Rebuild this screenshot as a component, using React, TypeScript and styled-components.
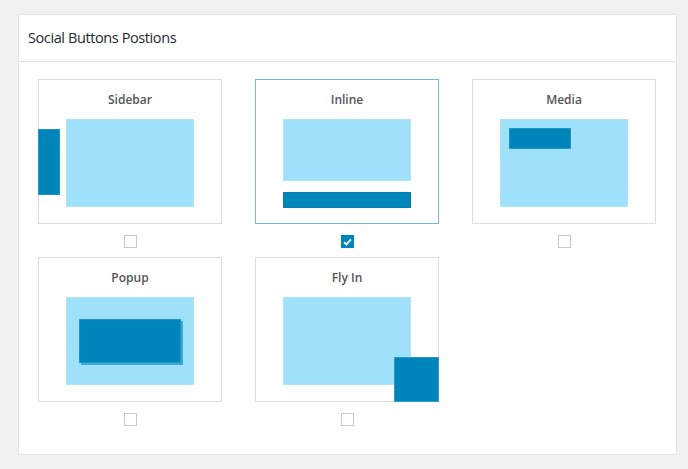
import styled, { createGlobalStyle } from 'styled-components';

const GlobalStyle = createGlobalStyle`
    body {
        margin: 0;
        background: #f1f1f1;
        font-family: "Open Sans", "Liberation Sans", sans-serif;
        color: #23282d;
    }
`;

const Page = styled.div`
    padding: 14px 11px 14px 18px;
`;

const Panel = styled.div`
    width: 659px;
    height: 441px;
    box-sizing: border-box;
    background: #fff;
    border: 1px solid #e2e4e7;
`;

const PanelHeader = styled.div`
    height: 47px;
    box-sizing: border-box;
    padding: 0 9px 1px;
    display: flex;
    align-items: center;
    border-bottom: 1px solid #e5e5e5;
    font-size: 14.5px;
    letter-spacing: -0.4px;
    font-weight: 400;
    color: #23282d;
`;

const Grid = styled.div`
    display: grid;
    grid-template-columns: repeat(3, 184px);
    column-gap: 33px;
    row-gap: 9px;
    padding: 17px 0 0 19px;
`;

const Option = styled.div`
    display: flex;
    flex-direction: column;
    align-items: center;
`;

const Card = styled.div<{ $active?: boolean }>`
    position: relative;
    width: 184px;
    height: 145px;
    box-sizing: border-box;
    border: 1px solid ${p => (p.$active ? '#6dbbe0' : '#dcdcdc')};
    display: flex;
    flex-direction: column;
    align-items: center;
`;

const CardTitle = styled.div`
    margin-top: 11px;
    height: 18px;
    line-height: 18px;
    font-size: 12px;
    font-weight: 600;
    color: #555;
`;

const Screen = styled.div<{ $h?: number }>`
    position: relative;
    margin-top: 10px;
    width: 128px;
    height: ${p => p.$h ?? 88}px;
    box-sizing: border-box;
    background: #9fe0fb;
    border: 1px solid #aee5fb;
`;

const Bar = styled.div`
    margin-top: 11px;
    width: 128px;
    height: 16px;
    background: #0085ba;
    border: 1px solid #0a7aa8;
    box-sizing: border-box;
`;

const SideBar = styled.div`
    position: absolute;
    left: -1px;
    top: 49px;
    width: 22px;
    height: 66px;
    box-sizing: border-box;
    background: #0085ba;
    border: 1px solid #1f95c4;
`;

const MediaBar = styled.div`
    position: absolute;
    left: 8px;
    top: 8px;
    width: 62px;
    height: 21px;
    box-sizing: border-box;
    background: #0085ba;
    border: 1px solid #1f95c4;
`;

const PopupBox = styled.div`
    position: absolute;
    left: 12px;
    top: 21px;
    width: 102px;
    height: 44px;
    box-sizing: border-box;
    background: #0085ba;
    border: 1px solid #1f95c4;
    box-shadow: 2px 2px 0 #3fa7d3;
`;

const FlyBox = styled.div`
    position: absolute;
    right: -1px;
    bottom: -1px;
    width: 45px;
    height: 45px;
    box-sizing: border-box;
    background: #0085ba;
    border: 1px solid #2a9ccb;
`;

const Check = styled.span<{ $checked?: boolean }>`
    margin-top: 11px;
    width: 13px;
    height: 13px;
    box-sizing: border-box;
    display: flex;
    align-items: center;
    justify-content: center;
    background: ${p => (p.$checked ? '#0085ba' : '#fff')};
    border: 1px solid ${p => (p.$checked ? '#0085ba' : '#c8c8c8')};
`;

const CheckMark = () => (
    <svg width="9" height="8" viewBox="0 0 9 8">
        <path d="M1 4.2 L3.4 6.4 L8 1.4" fill="none" stroke="#fff" strokeWidth="1.8" />
    </svg>
);

export default function App() {
    return (
        <Page>
            <GlobalStyle />
            <Panel>
                <PanelHeader>Social Buttons Postions</PanelHeader>
                <Grid>
                    <Option>
                        <Card>
                            <CardTitle>Sidebar</CardTitle>
                            <Screen />
                            <SideBar />
                        </Card>
                        <Check />
                    </Option>
                    <Option>
                        <Card $active>
                            <CardTitle>Inline</CardTitle>
                            <Screen $h={62} />
                            <Bar />
                        </Card>
                        <Check $checked>
                            <CheckMark />
                        </Check>
                    </Option>
                    <Option>
                        <Card>
                            <CardTitle>Media</CardTitle>
                            <Screen>
                                <MediaBar />
                            </Screen>
                        </Card>
                        <Check />
                    </Option>
                    <Option>
                        <Card>
                            <CardTitle>Popup</CardTitle>
                            <Screen>
                                <PopupBox />
                            </Screen>
                        </Card>
                        <Check />
                    </Option>
                    <Option>
                        <Card>
                            <CardTitle>Fly In</CardTitle>
                            <Screen />
                            <FlyBox />
                        </Card>
                        <Check />
                    </Option>
                </Grid>
            </Panel>
        </Page>
    );
}
